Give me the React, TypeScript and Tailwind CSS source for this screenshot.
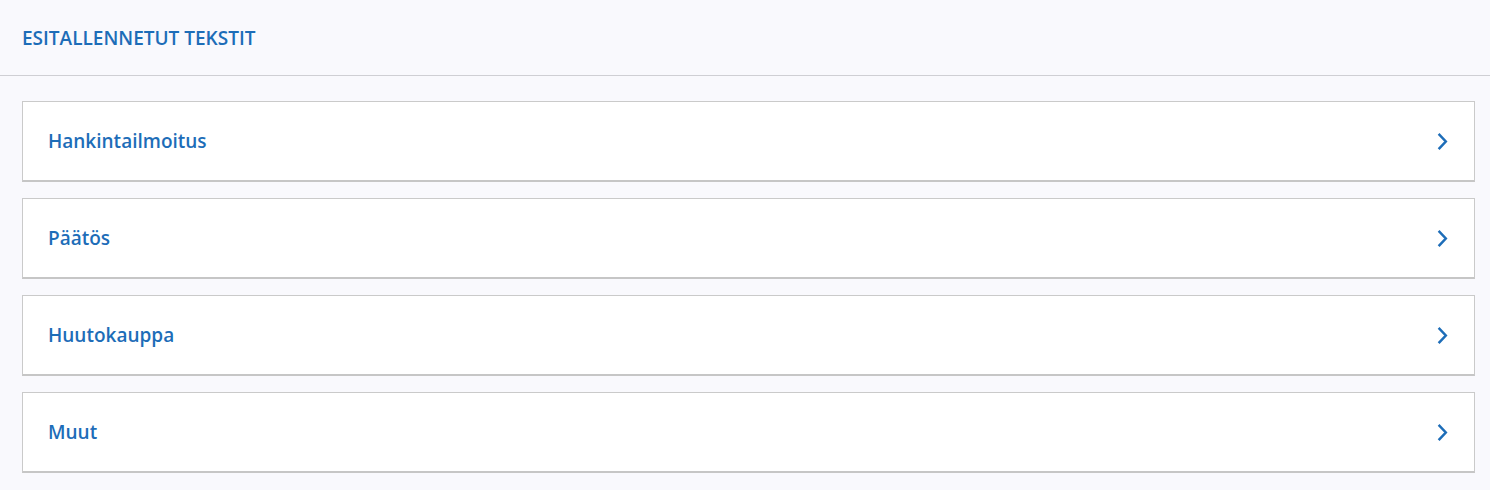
import React from "react";

const items = ["Hankintailmoitus", "Päätös", "Huutokauppa", "Muut"];

function Chevron() {
  return (
    <svg width="12" height="17" viewBox="0 0 12 17" fill="none">
      <path d="M2.5 1.8 L8.8 8.5 L2.5 15.2" stroke="#1d6db8" strokeWidth="2.5" strokeLinecap="square" strokeLinejoin="miter" />
    </svg>
  );
}

export default function App() {
  return (
    <div className="min-h-[490px] bg-[#f9f9fd]" style={{ fontFamily: '"Open Sans", sans-serif' }}>
      <div className="h-[76px] border-b border-[#cfcfd4] pl-[22px] flex items-center">
        <h1 className="text-[19px] font-semibold text-[#1d6db8] pt-[1px]">ESITALLENNETUT TEKSTIT</h1>
      </div>
      <div className="pl-[22px] pr-[15px] pt-[25px] flex flex-col gap-[16px]">
        {items.map((t) => (
          <div
            key={t}
            className="h-[81px] bg-white border border-[#cacaca] border-b-2 border-b-[#c6c6c6] flex items-center justify-between pl-[25px] pr-[25px] pt-[1px]"
          >
            <span className="text-[19px] font-semibold text-[#1d6db8]">{t}</span>
            <Chevron />
          </div>
        ))}
      </div>
    </div>
  );
}
